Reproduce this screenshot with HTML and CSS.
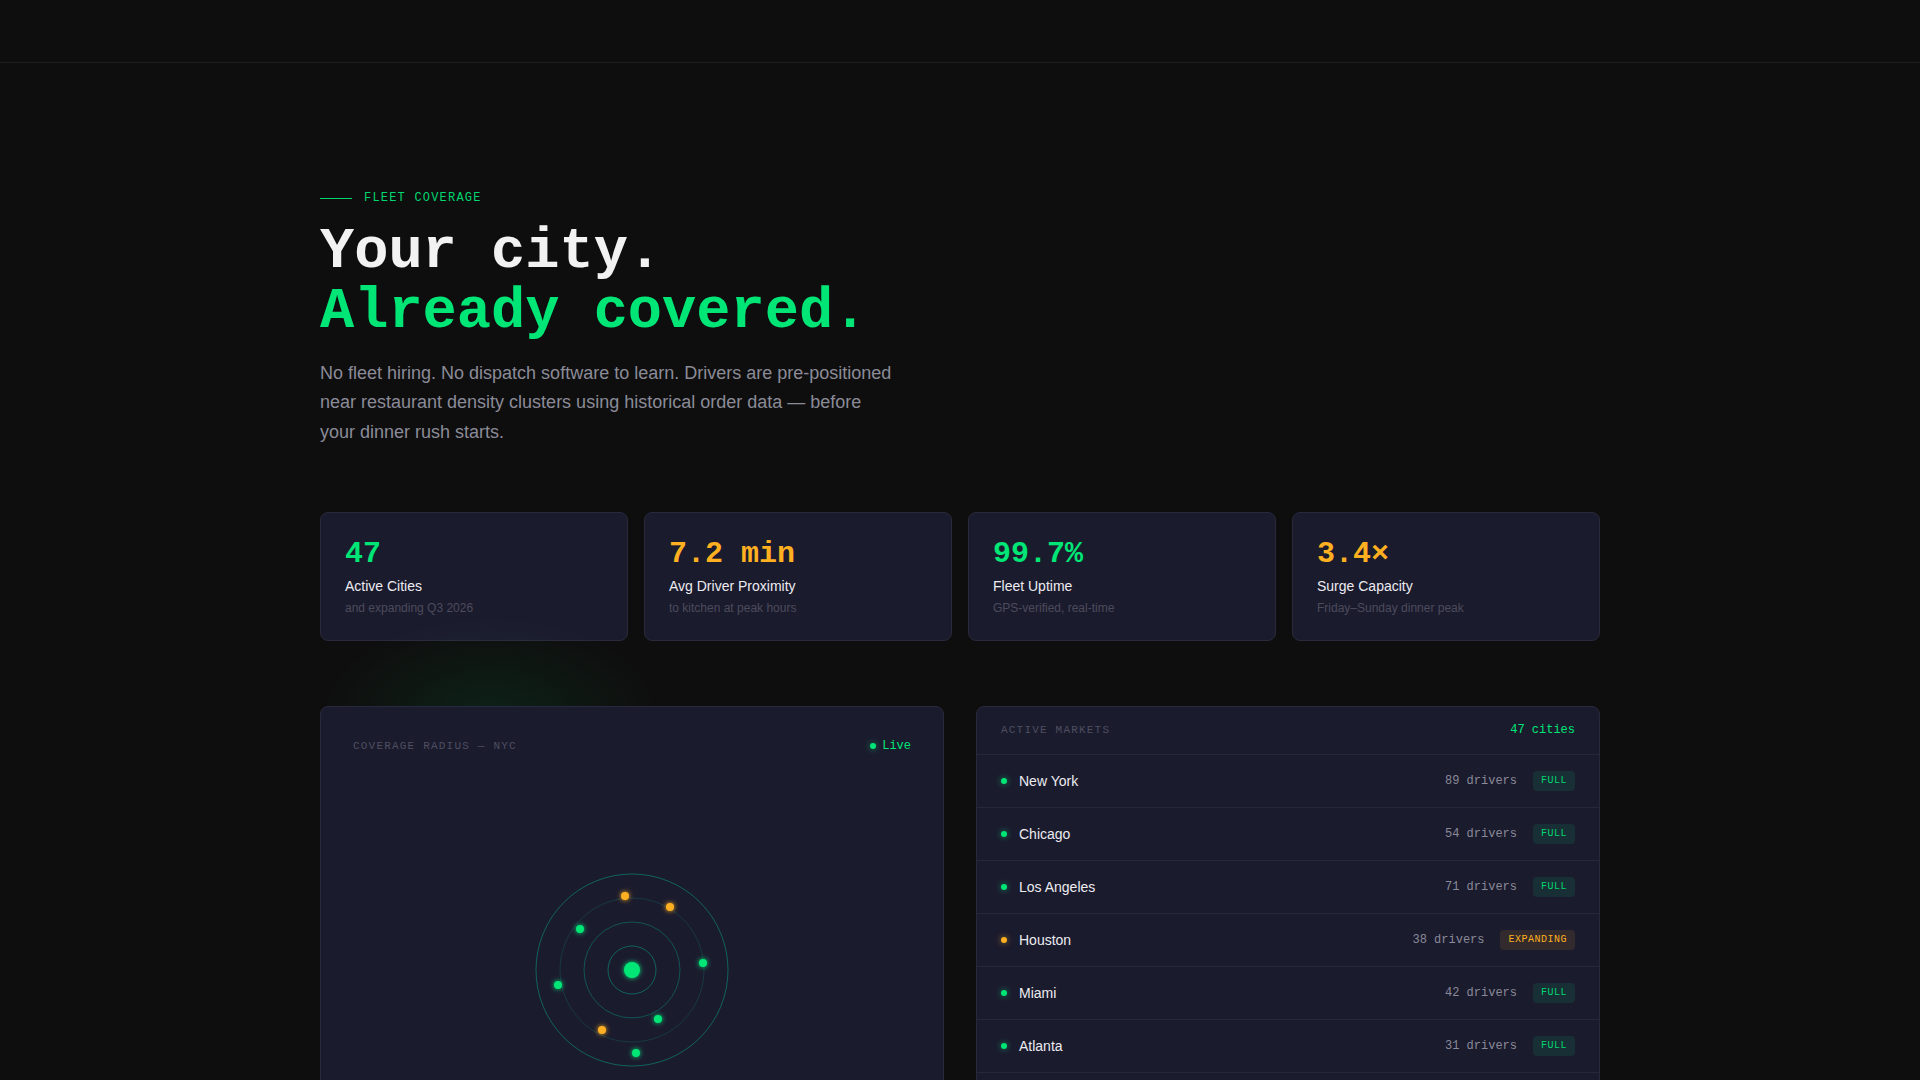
FILE: index.html
```html
<!DOCTYPE html>
<html lang="en">
  <head>
    <meta charset="utf-8" />
    <title>Fleet Coverage</title>
    <link rel="stylesheet" href="styles.css">
  </head>
  <body>
    <header class="topbar"></header>

    <main class="coverage">
      <div class="eyebrow"><span class="eyebrow-line"></span>FLEET COVERAGE</div>
      <h1 class="headline">
        Your city.<br />
        <span class="accent">Already covered.</span>
      </h1>
      <p class="lede">
        No fleet hiring. No dispatch software to learn. Drivers are
        pre-positioned near restaurant density clusters using historical order
        data — before your dinner rush starts.
      </p>

      <div class="stats">
        <div class="stat">
          <div class="stat-value green">47</div>
          <div class="stat-label">Active Cities</div>
          <div class="stat-note">and expanding Q3 2026</div>
        </div>
        <div class="stat">
          <div class="stat-value amber">7.2 min</div>
          <div class="stat-label">Avg Driver Proximity</div>
          <div class="stat-note">to kitchen at peak hours</div>
        </div>
        <div class="stat">
          <div class="stat-value green">99.7%</div>
          <div class="stat-label">Fleet Uptime</div>
          <div class="stat-note">GPS-verified, real-time</div>
        </div>
        <div class="stat">
          <div class="stat-value amber">3.4×</div>
          <div class="stat-label">Surge Capacity</div>
          <div class="stat-note">Friday–Sunday dinner peak</div>
        </div>
      </div>

      <div class="panels">
        <div class="glow"></div>

        <section class="card map-card">
          <div class="map-head">
            <span class="panel-title">COVERAGE RADIUS — NYC</span>
            <span class="live"><span class="dot"></span>Live</span>
          </div>
          <div class="map-area">
            <svg class="radar" width="210" height="210" viewBox="-105 -105 210 210">
              <defs>
                <filter id="glow" x="-100%" y="-100%" width="300%" height="300%">
                  <feGaussianBlur stdDeviation="2.5" result="blur" />
                  <feMerge>
                    <feMergeNode in="blur" />
                    <feMergeNode in="SourceGraphic" />
                  </feMerge>
                </filter>
              </defs>
              <!-- range rings -->
              <circle r="96" fill="none" stroke="#00d4a8" stroke-opacity="0.38" />
              <circle r="72" fill="none" stroke="#00d4a8" stroke-opacity="0.16" />
              <circle r="48" fill="none" stroke="#00d4a8" stroke-opacity="0.3" />
              <circle r="24" fill="none" stroke="#00d4a8" stroke-opacity="0.38" />
              <!-- hub -->
              <circle r="8" fill="#00e676" filter="url(#glow)" />
              <!-- drivers -->
              <g filter="url(#glow)">
                <circle cx="-7" cy="-74" r="4" fill="#ffb020" />
                <circle cx="38" cy="-63" r="4" fill="#ffb020" />
                <circle cx="-52" cy="-41" r="4" fill="#00e676" />
                <circle cx="71" cy="-7" r="4" fill="#00e676" />
                <circle cx="-74" cy="15" r="4" fill="#00e676" />
                <circle cx="26" cy="49" r="4" fill="#00e676" />
                <circle cx="-30" cy="60" r="4" fill="#ffb020" />
                <circle cx="4" cy="83" r="4" fill="#00e676" />
              </g>
            </svg>
          </div>
        </section>

        <section class="card markets">
          <div class="markets-head">
            <span class="panel-title">ACTIVE MARKETS</span>
            <span class="count">47 cities</span>
          </div>
          <ul class="market-list">
            <li class="market">
              <span class="dot"></span><span class="city">New York</span>
              <span class="drivers">89 drivers</span><span class="badge full">FULL</span>
            </li>
            <li class="market">
              <span class="dot"></span><span class="city">Chicago</span>
              <span class="drivers">54 drivers</span><span class="badge full">FULL</span>
            </li>
            <li class="market">
              <span class="dot"></span><span class="city">Los Angeles</span>
              <span class="drivers">71 drivers</span><span class="badge full">FULL</span>
            </li>
            <li class="market">
              <span class="dot amber"></span><span class="city">Houston</span>
              <span class="drivers">38 drivers</span><span class="badge expanding">EXPANDING</span>
            </li>
            <li class="market">
              <span class="dot"></span><span class="city">Miami</span>
              <span class="drivers">42 drivers</span><span class="badge full">FULL</span>
            </li>
            <li class="market">
              <span class="dot"></span><span class="city">Atlanta</span>
              <span class="drivers">31 drivers</span><span class="badge full">FULL</span>
            </li>
            <li class="market">
              <span class="dot"></span><span class="city">Dallas</span>
              <span class="drivers">36 drivers</span><span class="badge full">FULL</span>
            </li>
          </ul>
        </section>
      </div>
    </main>
  </body>
</html>
```

FILE: styles.css
```css
* {
  box-sizing: border-box;
}
body {
  margin: 0;
  background: #0e0e0e;
  color: #e8e8ee;
  font-family: "Liberation Sans", Arial, sans-serif;
}
.topbar {
  height: 63px;
  border-bottom: 1px solid #1e1e1e;
}
.coverage {
  width: 1280px;
  margin: 0 auto;
  padding-top: 127px;
}

/* heading block */
.eyebrow {
  display: flex;
  align-items: center;
  gap: 12px;
  height: 16px;
  font-family: "Liberation Mono", monospace;
  font-size: 12px;
  letter-spacing: 1.2px;
  color: #00d670;
}
.eyebrow-line {
  width: 32px;
  height: 1px;
  background: #00d670;
}
.headline {
  margin: 16px 0 17px;
  font-family: "Liberation Mono", monospace;
  font-size: 57px;
  line-height: 60px;
  font-weight: 700;
  color: #f2f2f2;
}
.accent {
  color: #00e676;
}
.lede {
  margin: 0;
  max-width: 580px;
  font-size: 18px;
  line-height: 29.3px;
  color: #8b8b98;
}

/* stat cards */
.stats {
  display: grid;
  grid-template-columns: repeat(4, 1fr);
  gap: 16px;
  margin-top: 65px;
}
.stat {
  padding: 24px;
  background: #1b1b2e;
  border: 1px solid #29293c;
  border-radius: 8px;
}
.stat-value {
  font-family: "Liberation Mono", monospace;
  font-size: 30px;
  line-height: 34px;
  font-weight: 700;
}
.green {
  color: #00e676;
}
.amber {
  color: #ffb020;
}
.stat-label {
  margin-top: 5px;
  font-size: 14px;
  line-height: 20px;
  color: #ececf0;
}
.stat-note {
  margin-top: 4px;
  font-size: 12px;
  line-height: 16px;
  color: #4b4b5c;
}

/* lower panels */
.panels {
  position: relative;
  display: grid;
  grid-template-columns: 1fr 1fr;
  gap: 32px;
  margin-top: 65px;
}
.glow {
  position: absolute;
  left: 0;
  top: -90px;
  width: 340px;
  height: 200px;
  background: radial-gradient(ellipse at center, rgba(0, 230, 118, 0.09), rgba(0, 230, 118, 0) 70%);
  pointer-events: none;
}
.card {
  position: relative;
  background: #1b1b2e;
  border: 1px solid #29293c;
  border-radius: 8px;
  overflow: hidden;
}
.panel-title {
  font-family: "Liberation Mono", monospace;
  font-size: 11px;
  line-height: 14px;
  letter-spacing: 1.2px;
  color: #4e4e60;
}

.map-card {
  padding: 32px 32px 0;
}
.map-head {
  display: flex;
  justify-content: space-between;
  align-items: center;
  height: 14px;
}
.live {
  display: flex;
  align-items: center;
  gap: 6px;
  font-family: "Liberation Mono", monospace;
  font-size: 12px;
  color: #00e676;
}
.dot {
  width: 6px;
  height: 6px;
  border-radius: 50%;
  background: #00e676;
  box-shadow: 0 0 6px rgba(0, 230, 118, 0.6);
  flex-shrink: 0;
}
.dot.amber {
  background: #ffb020;
  box-shadow: 0 0 6px rgba(255, 176, 32, 0.6);
}
.map-area {
  height: 434px;
  display: flex;
  align-items: center;
  justify-content: center;
}

.markets-head {
  display: flex;
  justify-content: space-between;
  align-items: center;
  padding: 16px 24px 17px;
  border-bottom: 1px solid #27273a;
}
.count {
  font-family: "Liberation Mono", monospace;
  font-size: 12px;
  line-height: 14px;
  color: #00e676;
}
.market-list {
  list-style: none;
  margin: 0;
  padding: 0;
}
.market {
  display: flex;
  align-items: center;
  min-height: 53.1px;
  padding: 0 24px;
  border-bottom: 1px solid #27273a;
}
.city {
  flex: 1;
  margin-left: 12px;
  font-size: 14px;
  line-height: 20px;
  color: #ececf0;
}
.drivers {
  font-family: "Liberation Mono", monospace;
  font-size: 12px;
  color: #8a8a98;
}
.badge {
  margin-left: 16px;
  padding: 3px 8px;
  border-radius: 4px;
  font-family: "Liberation Mono", monospace;
  font-size: 10px;
  line-height: 14px;
  letter-spacing: 0.5px;
}
.badge.full {
  color: #00d670;
  background: rgba(0, 230, 118, 0.1);
}
.badge.expanding {
  color: #ffb020;
  background: rgba(255, 176, 32, 0.1);
}
```
